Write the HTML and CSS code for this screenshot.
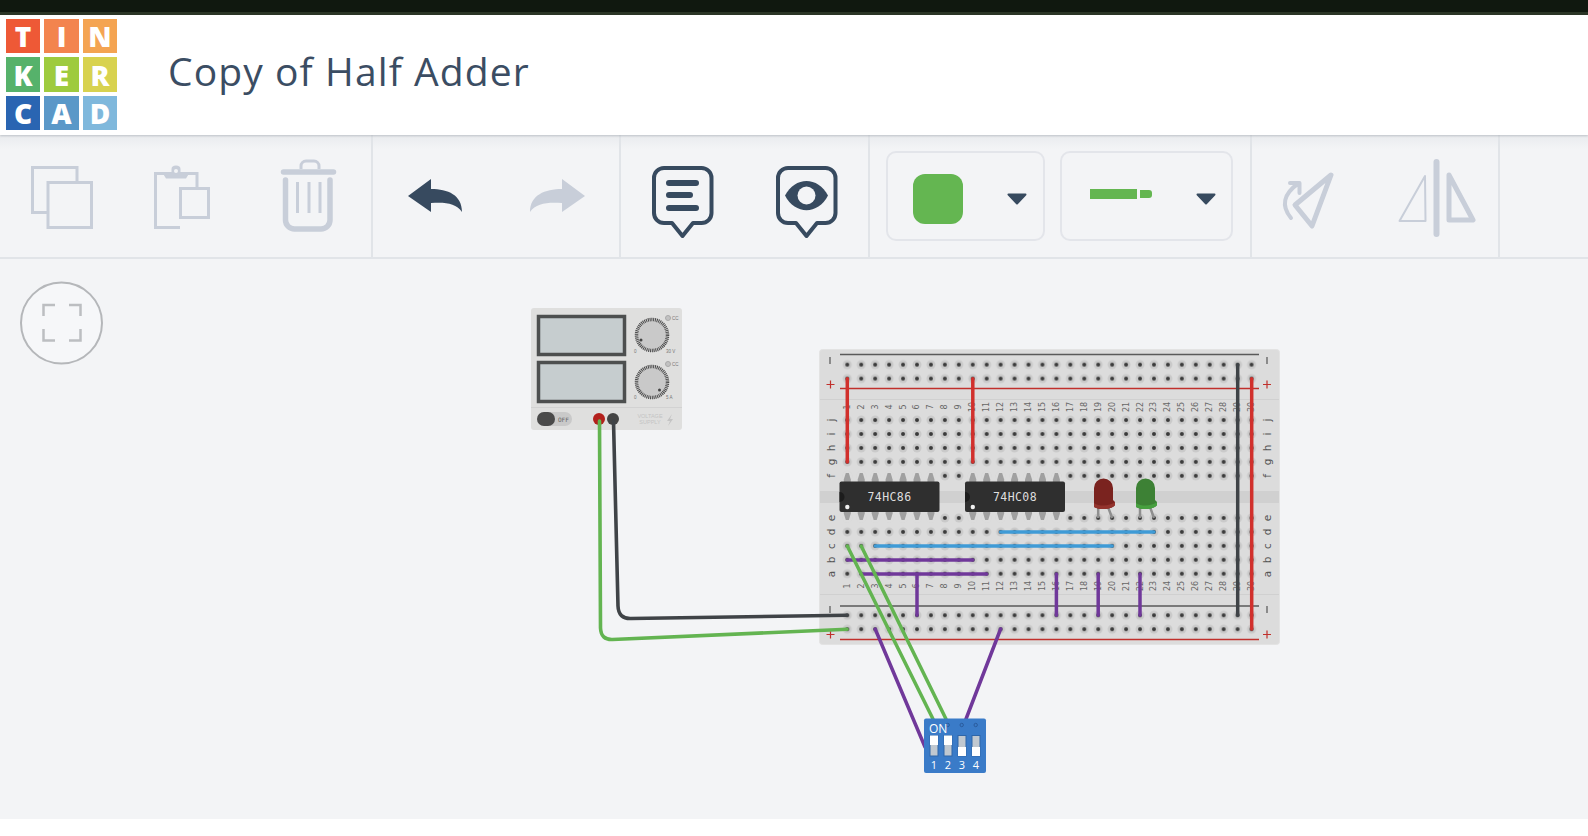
FILE: index.html
```html
<!DOCTYPE html>
<html lang="en">
<head>
<meta charset="utf-8">
<title>Copy of Half Adder</title>
<link rel="stylesheet" href="styles.css">
</head>
<body>
<div class="topbar"></div>
<header class="header">
  <div class="logo">
    <span class="tile t1">T</span><span class="tile t2">I</span><span class="tile t3">N</span>
    <span class="tile t4">K</span><span class="tile t5">E</span><span class="tile t6">R</span>
    <span class="tile t7">C</span><span class="tile t8">A</span><span class="tile t9">D</span>
  </div>
  <h1 class="title">Copy of Half Adder</h1>
</header>
<nav class="toolbar">
  <div class="group g1">
    <svg class="btn" viewBox="0 135 124 123">
      <path class="ic-off" d="M47.5 212.5H32.5V167.5H77V182.5"/>
      <rect class="ic-off" x="48" y="182.5" width="43.5" height="45"/>
    </svg>
    <svg class="btn" viewBox="124 135 124 123">
      <path class="ic-off" d="M180 227.5H155.5V173.5H197V188"/>
      <rect class="ic-off" x="180.5" y="188.5" width="28" height="29"/>
      <path class="ic-off-fill" d="M162 172H171.5V169a4.5 3.5 0 0 1 9 0V172H190L186 178.5H166Z"/>
      <circle class="ic-bg" cx="176" cy="171" r="2"/>
    </svg>
    <svg class="btn" viewBox="248 135 124 123">
      <path class="ic-off-thick" d="M283.5 172H333.5"/>
      <path class="ic-off" d="M301 169V166a5 5 0 0 1 5-5H314a5 5 0 0 1 5 5V169"/>
      <path class="ic-off-thick" d="M285.5 180V220a9 9 0 0 0 9 9H321a9 9 0 0 0 9-9V180"/>
      <path class="ic-off" d="M297.5 182V213M309 182V213M320 182V213"/>
    </svg>
  </div>
  <div class="group g2">
    <svg class="btn" viewBox="373 135 123 123">
      <path class="ic-solid" d="M408 196L431 179V189C448 189 462 195 462 212C456 203 445 202 431 203V212Z"/>
    </svg>
    <svg class="btn" viewBox="496 135 123 123">
      <path class="ic-off-fill" d="M585 196L562 179V189C545 189 530 195 530 212C536 203 548 202 562 203V212Z"/>
    </svg>
  </div>
  <div class="group g3">
    <svg class="btn" viewBox="621 135 124 123">
      <path class="ic-dark" d="M664 168H701.5a10 10 0 0 1 10 10V213a10 10 0 0 1-10 10H693L682.5 236L672 223H664a10 10 0 0 1-10-10V178a10 10 0 0 1 10-10Z"/>
      <path class="ic-bar" d="M669 183H696M669 195H690M669 208H696"/>
    </svg>
    <svg class="btn" viewBox="745 135 123 123">
      <path class="ic-dark" d="M788 168H825.5a10 10 0 0 1 10 10V213a10 10 0 0 1-10 10H817L806.5 236L796 223H788a10 10 0 0 1-10-10V178a10 10 0 0 1 10-10Z"/>
      <path class="ic-solid" d="M785 195.5C795 176 818 176 828 195.5C818 215 795 215 785 195.5Z"/>
      <circle class="ic-bg" cx="806.5" cy="195.5" r="9"/>
    </svg>
  </div>
  <div class="group g4">
    <div class="picker picker-color">
      <div class="swatch"></div>
      <svg class="caret" viewBox="0 0 20 12"><path class="ic-solid-round" d="M1.5 1.5H18.5L10 10.5Z"/></svg>
    </div>
    <div class="picker picker-line">
      <div class="seg"></div>
      <div class="seg-tip"></div>
      <svg class="caret" viewBox="0 0 20 12"><path class="ic-solid-round" d="M1.5 1.5H18.5L10 10.5Z"/></svg>
    </div>
  </div>
  <div class="group g5">
    <svg class="btn" viewBox="1252 135 123 123">
      <path class="ic-off-thick2" d="M1331 175L1295 205L1312 226Z"/>
      <path class="ic-off-arrow" d="M1291 218C1281 206 1283 194 1299 183M1290 183H1299.5V193"/>
    </svg>
    <svg class="btn" viewBox="1375 135 123 123">
      <path class="ic-off-thick3" d="M1436.5 162V234"/>
      <path class="ic-off-thin" d="M1425 176L1399.5 221H1425.5Z"/>
      <path class="ic-off-thick2" d="M1449 175L1473 220H1449Z"/>
    </svg>
  </div>
</nav>
<main class="stage">
  <svg class="circuit" viewBox="0 259 1588 560">
    <defs>
      <pattern id="holes" patternUnits="userSpaceOnUse" x="840.33" y="0" width="13.94" height="13.94">
        <circle class="halo" cx="6.97" cy="6.97" r="4.5"/>
        <circle class="hole" cx="6.97" cy="6.97" r="2"/>
      </pattern>
      <g id="pin-top"><circle class="pin-mask" cx="0" cy="-1" r="5"/><path class="pin" d="M-1.5 -4H1.5L3.5 2.5V5H-3.5V2.5Z"/></g>
      <g id="pin-bot"><circle class="pin-mask" cx="0" cy="2" r="5"/><path class="pin" d="M-3.5 -4H3.5V-2.5L1.5 4H-1.5L-3.5 -2.5Z"/></g>
    </defs>

    <!-- fullscreen button -->
    <circle class="fs-ring" cx="61.5" cy="323" r="40.5"/>
    <path class="fs-mark" d="M43.5 316V305H55M69 305H80.5V316M80.5 329V340.5H69M55 340.5H43.5V329"/>

    <!-- power supply -->
    <rect class="psu" x="531" y="308" width="151" height="122" rx="3"/>
    <rect class="psu-screen" x="538.5" y="316.5" width="86" height="38"/>
    <rect class="psu-screen" x="538.5" y="362.5" width="86" height="39"/>
    <circle class="knob" cx="652" cy="335" r="17"/>
    <circle class="knob-ticks" cx="652" cy="335" r="15.5"/>
    <circle class="knob-dot" cx="641" cy="340" r="1.5"/>
    <circle class="knob" cx="652" cy="382" r="17"/>
    <circle class="knob-ticks" cx="652" cy="382" r="15.5"/>
    <circle class="knob-dot" cx="659.5" cy="390" r="1.5"/>
    <circle class="psu-led" cx="668" cy="318" r="2.5"/>
    <circle class="psu-led" cx="668" cy="364" r="2.5"/>
    <text class="psu-tiny" x="672" y="320">CC</text>
    <text class="psu-tiny" x="672" y="366">CC</text>
    <text class="psu-tiny" x="634" y="353">0</text>
    <text class="psu-tiny" x="666" y="353">30 V</text>
    <text class="psu-tiny" x="634" y="399">0</text>
    <text class="psu-tiny" x="666" y="399">5 A</text>
    <path class="psu-div" d="M531 407.5H682"/>
    <rect class="psu-switch" x="537" y="412" width="35" height="14" rx="7"/>
    <rect class="psu-toggle" x="537" y="412" width="18" height="14" rx="7"/>
    <text class="psu-off" x="558" y="422">OFF</text>
    <circle class="term-red" cx="599" cy="419" r="6"/>
    <circle class="term-black" cx="613" cy="419" r="6"/>
    <text class="psu-brand" x="650" y="418">VOLTAGE</text>
    <text class="psu-brand" x="650" y="424">SUPPLY</text>
    <path class="psu-bolt" d="M672 414L667 421H670L668 426L673 419H670Z"/>

    <!-- breadboard -->
    <rect class="board" x="819.5" y="349.5" width="460" height="295" rx="3"/>
    <path class="board-div" d="M820 399.5H1279M820 594.5H1279"/>
    <rect class="board-channel" x="820" y="491" width="459" height="12"/>
    <path class="rail-dark" d="M840 354.5H1259M840 606H1259"/>
    <path class="rail-red" d="M840 388.5H1259M840 639.5H1259"/>
    <path class="sign-dark" d="M830 357V364M1267 357V364M830 606V613M1267 606V613"/>
    <path class="sign-red" d="M826.5 384.5H834.5M830.5 380.5V388.5M1263 384.5H1271M1267 380.5V388.5M826.5 634.5H834.5M830.5 630.5V638.5M1263 634.5H1271M1267 630.5V638.5"/>

    <rect class="holes" x="840.33" y="0" width="418.2" height="27.88" transform="translate(0 357.7)"/>
    <rect class="holes" x="840.33" y="0" width="418.2" height="69.7" transform="translate(0 413.1)"/>
    <rect class="holes" x="840.33" y="0" width="418.2" height="69.7" transform="translate(0 511)"/>
    <rect class="holes" x="840.33" y="0" width="418.2" height="27.88" transform="translate(0 608.3)"/>

    <g class="nums" transform="translate(847.3 407) rotate(-90)">
      <text y="0">1</text><text y="13.94">2</text><text y="27.88">3</text><text y="41.82">4</text><text y="55.76">5</text><text y="69.7">6</text><text y="83.64">7</text><text y="97.58">8</text><text y="111.52">9</text><text y="125.46">10</text><text y="139.4">11</text><text y="153.34">12</text><text y="167.28">13</text><text y="181.22">14</text><text y="195.16">15</text><text y="209.1">16</text><text y="223.04">17</text><text y="236.98">18</text><text y="250.92">19</text><text y="264.86">20</text><text y="278.8">21</text><text y="292.74">22</text><text y="306.68">23</text><text y="320.62">24</text><text y="334.56">25</text><text y="348.5">26</text><text y="362.44">27</text><text y="376.38">28</text><text y="390.32">29</text><text y="404.26">30</text>
    </g>
    <g class="nums" transform="translate(847.3 586) rotate(-90)">
      <text y="0">1</text><text y="13.94">2</text><text y="27.88">3</text><text y="41.82">4</text><text y="55.76">5</text><text y="69.7">6</text><text y="83.64">7</text><text y="97.58">8</text><text y="111.52">9</text><text y="125.46">10</text><text y="139.4">11</text><text y="153.34">12</text><text y="167.28">13</text><text y="181.22">14</text><text y="195.16">15</text><text y="209.1">16</text><text y="223.04">17</text><text y="236.98">18</text><text y="250.92">19</text><text y="264.86">20</text><text y="278.8">21</text><text y="292.74">22</text><text y="306.68">23</text><text y="320.62">24</text><text y="334.56">25</text><text y="348.5">26</text><text y="362.44">27</text><text y="376.38">28</text><text y="390.32">29</text><text y="404.26">30</text>
    </g>
    <g class="letters" transform="translate(831 0) rotate(-90)">
      <text x="-420">j</text><text x="-434">i</text><text x="-448">h</text><text x="-462">g</text><text x="-476">f</text>
      <text x="-518">e</text><text x="-532">d</text><text x="-546">c</text><text x="-560">b</text><text x="-574">a</text>
    </g>
    <g class="letters" transform="translate(1267 0) rotate(-90)">
      <text x="-420">j</text><text x="-434">i</text><text x="-448">h</text><text x="-462">g</text><text x="-476">f</text>
      <text x="-518">e</text><text x="-532">d</text><text x="-546">c</text><text x="-560">b</text><text x="-574">a</text>
    </g>

    <!-- chip pins -->
    <use href="#pin-top" x="847.3" y="477"/><use href="#pin-top" x="861.24" y="477"/><use href="#pin-top" x="875.18" y="477"/><use href="#pin-top" x="889.12" y="477"/><use href="#pin-top" x="903.06" y="477"/><use href="#pin-top" x="917" y="477"/><use href="#pin-top" x="930.94" y="477"/>
    <use href="#pin-bot" x="847.3" y="516"/><use href="#pin-bot" x="861.24" y="516"/><use href="#pin-bot" x="875.18" y="516"/><use href="#pin-bot" x="889.12" y="516"/><use href="#pin-bot" x="903.06" y="516"/><use href="#pin-bot" x="917" y="516"/><use href="#pin-bot" x="930.94" y="516"/>
    <use href="#pin-top" x="972.76" y="477"/><use href="#pin-top" x="986.7" y="477"/><use href="#pin-top" x="1000.64" y="477"/><use href="#pin-top" x="1014.58" y="477"/><use href="#pin-top" x="1028.52" y="477"/><use href="#pin-top" x="1042.46" y="477"/><use href="#pin-top" x="1056.4" y="477"/>
    <use href="#pin-bot" x="972.76" y="516"/><use href="#pin-bot" x="986.7" y="516"/><use href="#pin-bot" x="1000.64" y="516"/><use href="#pin-bot" x="1014.58" y="516"/><use href="#pin-bot" x="1028.52" y="516"/><use href="#pin-bot" x="1042.46" y="516"/><use href="#pin-bot" x="1056.4" y="516"/>

    <!-- chips -->
    <rect class="chip" x="839.5" y="481.5" width="100" height="30.5" rx="2"/>
    <path class="chip-notch" d="M839.5 492a5 5 0 0 1 0 10Z"/>
    <circle class="chip-dot" cx="847.3" cy="507" r="2.2"/>
    <text class="chip-label" x="889.5" y="501">74HC86</text>
    <rect class="chip" x="965" y="481.5" width="100" height="30.5" rx="2"/>
    <path class="chip-notch" d="M965 492a5 5 0 0 1 0 10Z"/>
    <circle class="chip-dot" cx="972.8" cy="507" r="2.2"/>
    <text class="chip-label" x="1015" y="501">74HC08</text>

    <!-- LEDs -->
    <path class="led-leg" d="M1098.2 507V518M1108 507L1112.2 518M1140 507V518M1150 507L1154 518"/>
    <path class="led-red" d="M1094 504V488a9.5 9.5 0 0 1 19 0V500L1115 502V505C1112 510 1098 510 1094 507Z"/>
    <path class="led-red-rim" d="M1094 503C1100 507 1110 506 1115 502V505C1112 510 1098 510 1094 507Z"/>
    <path class="led-green" d="M1136 504V488a9.5 9.5 0 0 1 19 0V500L1157 502V505C1154 510 1140 510 1136 507Z"/>
    <path class="led-green-rim" d="M1136 503C1142 507 1152 506 1157 502V505C1154 510 1140 510 1136 507Z"/>

    <!-- wires on board -->
    <path class="w w-red" d="M847.3 378.7V462M972.8 378.7V462M1251.7 378.7V629"/>
    <path class="w w-black" d="M1237.7 364.7V615.3"/>
    <path class="w w-blue" d="M1000.6 532H1154M875.2 546H1112.2"/>
    <path class="w w-purple" d="M847.3 560H972.8M861.2 574H986.7M917 574V615.3M1056.4 574V615.3M1098.2 574V615.3M1140 574V615.3M875.2 629L925 747M1000.6 629L966 719"/>
    <path class="w w-green" d="M847.3 546L933 719M861.2 546L946 719"/>

    <!-- supply wires -->
    <path class="w2 w-black" d="M613.5 421L618 606Q618.5 619 631 618.5L847 615.3"/>
    <path class="w2 w-green" d="M599.5 421L600.5 628Q601 640 612.5 639.5L847 629.2"/>

    <!-- DIP switch -->
    <rect class="dip" x="924" y="718.5" width="62" height="54.5" rx="2"/>
    <circle class="dip-pin" cx="947.7" cy="725" r="1.7"/>
    <circle class="dip-pin" cx="961.7" cy="725" r="1.7"/>
    <circle class="dip-pin" cx="975.7" cy="725" r="1.7"/>
    <text class="dip-on" x="929" y="732.5">ON</text>
    <rect class="dip-slot" x="930" y="735.5" width="8" height="20.5"/>
    <rect class="dip-white" x="930" y="735.5" width="8" height="9.5"/>
    <rect class="dip-slot" x="944" y="735.5" width="8" height="20.5"/>
    <rect class="dip-white" x="944" y="735.5" width="8" height="9.5"/>
    <rect class="dip-slot" x="958" y="735.5" width="8" height="20.5"/>
    <rect class="dip-white" x="958" y="747" width="8" height="9"/>
    <rect class="dip-slot" x="972" y="735.5" width="8" height="20.5"/>
    <rect class="dip-white" x="972" y="747" width="8" height="9"/>
    <text class="dip-num" x="934" y="769">1</text>
    <text class="dip-num" x="948" y="769">2</text>
    <text class="dip-num" x="962" y="769">3</text>
    <text class="dip-num" x="976" y="769">4</text>
  </svg>
</main>
<div class="footer"></div>
</body>
</html>
```
FILE: styles.css
```css
* { box-sizing: border-box; }
html, body { margin: 0; height: 100%; }
body {
  width: 1588px;
  height: 836px;
  overflow: hidden;
  background: #fff;
  font-family: "Open Sans", sans-serif;
  display: flex;
  flex-direction: column;
}
.topbar {
  height: 15px;
  flex: none;
  background: #10180f;
  border-bottom: 3px solid #2b3526;
}
.header {
  height: 120px;
  flex: none;
  background: #fff;
  display: flex;
  align-items: center;
  position: relative;
  z-index: 1;
  box-shadow: 0 1px 2px rgba(60, 70, 85, .25);
}
.logo {
  margin-left: 6px;
  display: grid;
  grid-template-columns: 34px 35px 34px;
  grid-template-rows: 34px 35px 34px;
  gap: 4px;
  margin-top: -1px;
}
.tile {
  display: flex;
  align-items: center;
  justify-content: center;
  color: #fff;
  font-weight: 800;
  font-size: 28px;
  line-height: 1;
}
.t1 { background: #ee5936; }
.t2 { background: #f3844e; }
.t3 { background: #f4a452; }
.t4 { background: #56b26b; }
.t5 { background: #9ecb3e; }
.t6 { background: #d8d24f; }
.t7 { background: #2a65b2; }
.t8 { background: #5a98c8; }
.t9 { background: #7fb8dc; }
.title {
  margin: 0 0 10px 51px;
  font-weight: 400;
  font-size: 39px;
  line-height: 1;
  color: #3b4d63;
  letter-spacing: 1.1px;
}
.toolbar {
  height: 124px;
  flex: none;
  display: flex;
  background: linear-gradient(#e9ebee, #f3f4f6 14px);
  border-bottom: 2px solid #e1e4e8;
}
.group {
  flex: none;
  height: 122px;
  display: flex;
  border-right: 2px solid #e1e4e8;
}
.g1 { width: 373px; }
.g2 { width: 248px; }
.g3 { width: 249px; }
.g4 { width: 382px; padding: 16px 0 0 16px; gap: 15px; }
.g5 { width: 248px; }
.btn { display: block; flex: none; height: 123px; }
.g1 .btn { width: 124px; }
.g2 .btn, .g5 .btn { width: 123px; }
.g3 .btn:first-child { width: 124px; }
.g3 .btn:last-child { width: 123px; }
.ic-off, .ic-off-thin, .ic-off-thick, .ic-off-thick2, .ic-off-thick3, .ic-off-arrow {
  fill: none;
  stroke: #c8ced9;
}
.ic-off { stroke-width: 3; }
.ic-off-thin { stroke-width: 2; stroke-linejoin: round; }
.ic-off-thick { stroke-width: 5.5; stroke-linecap: round; }
.ic-off-thick2 { stroke-width: 5; stroke-linejoin: round; }
.ic-off-thick3 { stroke-width: 6; stroke-linecap: round; }
.ic-off-arrow { stroke-width: 4; stroke-linecap: round; stroke-linejoin: round; }
.ic-off-fill { fill: #c8ced9; }
.ic-bg { fill: #f3f4f6; }
.ic-solid { fill: #374a5f; }
.ic-solid-round { fill: #374a5f; stroke: #374a5f; stroke-width: 2; stroke-linejoin: round; }
.ic-dark { fill: none; stroke: #374a5f; stroke-width: 4; stroke-linejoin: round; }
.ic-bar { fill: none; stroke: #374a5f; stroke-width: 6; stroke-linecap: round; }
.picker {
  height: 90px;
  border: 2px solid #e3e5ea;
  border-radius: 10px;
  display: flex;
  align-items: center;
  flex: none;
}
.picker-color { width: 159px; padding-left: 25px; }
.picker-line { width: 173px; padding-left: 28px; }
.swatch {
  width: 50px;
  height: 50px;
  border-radius: 12px;
  background: #64b651;
  margin-top: 5px;
}
.seg {
  width: 47px;
  height: 10px;
  background: #64b651;
  margin-top: -4px;
}
.seg-tip {
  width: 12px;
  height: 8px;
  margin: -4px 0 0 3px;
  border-radius: 0 3px 3px 0;
  background: #64b651;
}
.caret { display: block; width: 20px; height: 12px; margin-top: 6px; margin-left: 44px; flex: none; }
.stage {
  height: 560px;
  flex: none;
  background: #f3f4f6;
}
.circuit { display: block; width: 1588px; height: 560px; }
.footer { flex: 1; background: #fff; }

.fs-ring { fill: #f6f7f9; stroke: #b5b7ba; stroke-width: 2; }
.fs-mark { fill: none; stroke: #bcbec1; stroke-width: 2.5; }

.psu { fill: #dfdfde; }
.psu-screen { fill: #c6cdcf; stroke: #4d4f4f; stroke-width: 3.5; }
.knob { fill: #c9c9c9; }
.knob-ticks { fill: none; stroke: #444; stroke-width: 3.5; stroke-dasharray: .9 .9; }
.knob-dot { fill: #444; }
.psu-led { fill: #c2c2c2; stroke: #aaa; stroke-width: 1; }
.psu-tiny { font-family: "Liberation Sans", sans-serif; font-size: 4.5px; fill: #777; }
.psu-div { stroke: #d2d2d2; stroke-width: 1; fill: none; }
.psu-switch { fill: #c9c9c9; }
.psu-toggle { fill: #4a4a4a; }
.psu-off { font-family: "DejaVu Sans Mono", monospace; font-size: 6px; fill: #666; }
.term-red { fill: #b3201c; }
.term-black { fill: #444; }
.psu-brand { font-family: "Liberation Sans", sans-serif; font-size: 5.5px; fill: #c4c4c4; text-anchor: middle; }
.psu-bolt { fill: #c4c4c4; }

.board { fill: #dcdcdc; stroke: #e3e3e3; stroke-width: 1; }
.board-div { stroke: #d0d0d0; stroke-width: 1; fill: none; }
.board-channel { fill: #d0d0d0; }
.rail-dark { stroke: #5a5a5a; stroke-width: 1.5; fill: none; }
.rail-red { stroke: #c0302c; stroke-width: 1.5; fill: none; }
.sign-dark { stroke: #555; stroke-width: 1.2; fill: none; }
.sign-red { stroke: #c0302c; stroke-width: 1.2; fill: none; }
.holes { fill: url(#holes); }
.halo { fill: #c9c9c9; }
.hole { fill: #3a3a3a; }
.nums text {
  font-family: "DejaVu Sans", sans-serif;
  font-size: 8px;
  fill: #666;
  text-anchor: middle;
  dominant-baseline: central;
}
.letters text {
  font-family: "DejaVu Sans", sans-serif;
  font-size: 10.5px;
  fill: #555;
  text-anchor: middle;
  dominant-baseline: central;
}
.pin { fill: #a0a0a0; }
.pin-mask { fill: #dcdcdc; }
.chip { fill: #2f2f2f; }
.chip-notch { fill: #1c1c1c; }
.chip-dot { fill: #f0f0f0; }
.chip-label {
  font-family: "DejaVu Sans Mono", monospace;
  font-size: 11.5px;
  letter-spacing: .4px;
  fill: #dedede;
  text-anchor: middle;
}
.led-leg { stroke: #8f8f8f; stroke-width: 2.5; fill: none; }
.led-red { fill: #7a231f; }
.led-red-rim { fill: #93332d; }
.led-green { fill: #3d8135; }
.led-green-rim { fill: #47a03f; }
.w { fill: none; stroke-width: 3.5; stroke-linecap: round; }
.w2 { fill: none; stroke-width: 3.6; stroke-linecap: round; }
.w-red { stroke: #d1302c; }
.w-black { stroke: #3f4347; }
.w-blue { stroke: #3f9bd6; }
.w-purple { stroke: #70389a; }
.w-green { stroke: #63b451; }
.dip { fill: #3a7bc8; }
.dip-pin { fill: none; stroke: #2a5c9e; stroke-width: 1; }
.dip-on { font-family: "Open Sans", sans-serif; font-size: 12px; fill: #fff; }
.dip-slot { fill: #c0c8d0; stroke: #2f66a8; stroke-width: 1; }
.dip-white { fill: #fff; }
.dip-num { font-family: "Open Sans", sans-serif; font-size: 11px; fill: #fff; text-anchor: middle; }
```
